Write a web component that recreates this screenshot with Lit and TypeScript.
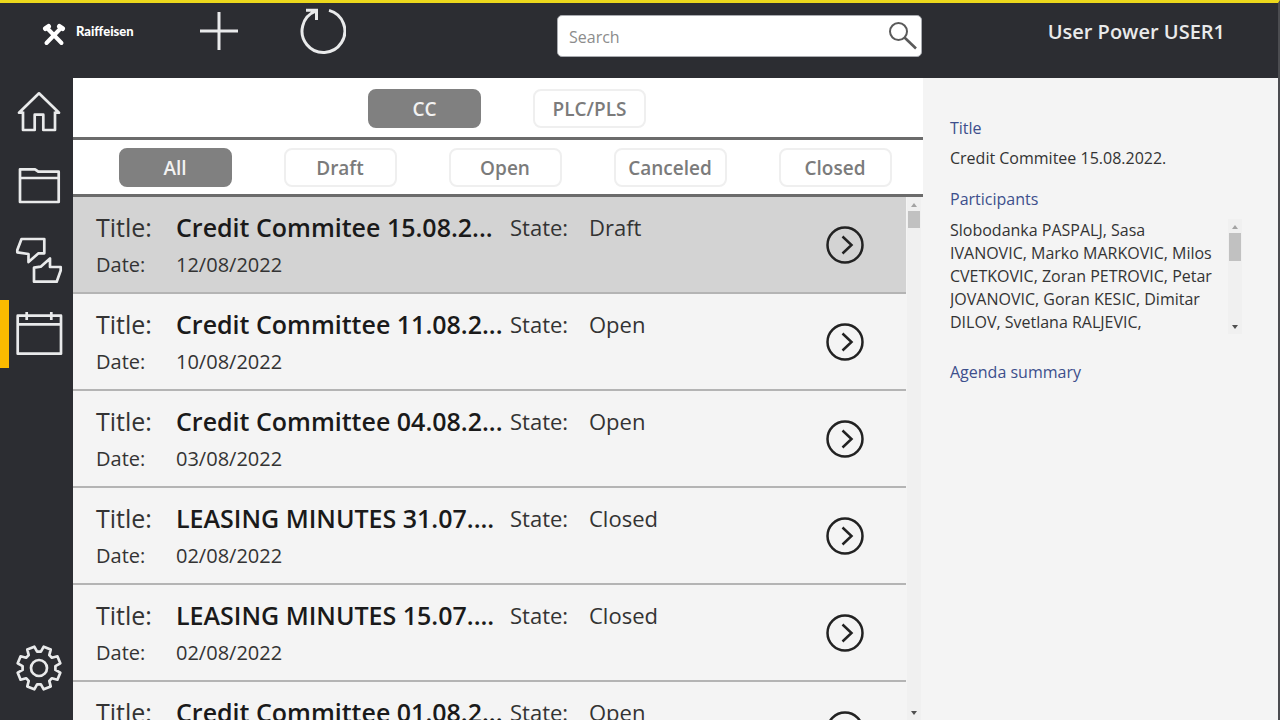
import { LitElement, html, css, svg } from "lit";
import { customElement, property, state } from "lit/decorators.js";
import { classMap } from "lit/directives/class-map.js";

interface Meeting {
  title: string;
  state: string;
  date: string;
}

const MEETINGS: Meeting[] = [
  { title: "Credit Commitee 15.08.2...", state: "Draft", date: "12/08/2022" },
  { title: "Credit Committee 11.08.2...", state: "Open", date: "10/08/2022" },
  { title: "Credit Committee 04.08.2...", state: "Open", date: "03/08/2022" },
  { title: "LEASING MINUTES 31.07....", state: "Closed", date: "02/08/2022" },
  { title: "LEASING MINUTES 15.07....", state: "Closed", date: "02/08/2022" },
  { title: "Credit Committee 01.08.2...", state: "Open", date: "01/08/2022" },
];

// Outline of an eight-toothed cog centred on (23, 23).
function cogPoints(): string {
  const pts: string[] = [];
  const at = (deg: number, r: number) => {
    const a = (deg * Math.PI) / 180;
    pts.push(`${(23 + r * Math.cos(a)).toFixed(1)},${(23 + r * Math.sin(a)).toFixed(1)}`);
  };
  for (let i = 0; i < 8; i++) {
    const c = 22.5 + i * 45;
    at(c - 16, 16.5);
    at(c - 10, 21.8);
    at(c + 10, 21.8);
    at(c + 16, 16.5);
  }
  return pts.join(" ");
}

const NAV_ICONS = {
  home: svg`<path d="M7 23.7H3L23 4.3L43 23.7H39M7 22.5V41H18.7V25.7H27.3V41H39V22.5"/>`,
  folder: svg`<path d="M4 6.3H19L22.3 8.7H42.7V39H4ZM4 15H42.7"/>`,
  votes: svg`<path d="M5.5 2H28.3V16.3H22.5L12.5 25V17L1.3 15.3V13ZM18 44.7V30.7L24.7 29.7L34 21.5V30H44.7V33.5L40.7 44.7Z"/>`,
  calendar: svg`<path d="M1.7 4.7H45V42.7H1.7ZM1.7 13.3H45M10.7 1V9M35.3 1V9"/>`,
  settings: svg`<polygon points=${cogPoints()}/><circle cx="23" cy="23" r="8"/>`,
};

@customElement("nav-item")
class NavItem extends LitElement {
  @property() icon: keyof typeof NAV_ICONS = "home";
  @property() label = "";
  @property({ type: Boolean }) active = false;

  static styles = css`
    :host {
      display: block;
    }
    .item {
      display: flex;
      align-items: center;
      width: 100%;
      height: 68px;
      padding: 0 0 0 7px;
      border: 0;
      border-left: 9px solid transparent;
      background: none;
      cursor: pointer;
    }
    .item.active {
      border-left-color: #fbba00;
    }
    .glyph {
      width: 46px;
      height: 46px;
      overflow: visible;
      fill: none;
      stroke: #e9eaeb;
      stroke-width: 2.7;
      stroke-linejoin: round;
    }
  `;

  render() {
    return html`<button class=${classMap({ item: true, active: this.active })} aria-label=${this.label}>
      <svg class="glyph" viewBox="0 0 46 46" aria-hidden="true">${NAV_ICONS[this.icon]}</svg>
    </button>`;
  }
}

@customElement("scroll-track")
class ScrollTrack extends LitElement {
  @property({ type: Number }) thumb = 17;

  static styles = css`
    :host {
      display: flex;
      flex-direction: column;
      align-items: center;
      width: 14px;
      background: #f0f0f0;
    }
    .arrow {
      flex: none;
      width: 14px;
      height: 14px;
      fill: #a3a3a3;
    }
    .down {
      margin-top: auto;
      fill: #505050;
    }
    .thumb {
      flex: none;
      width: 12px;
      background: #c1c1c1;
    }
  `;

  render() {
    return html`
      <svg class="arrow" viewBox="0 0 14 14" aria-hidden="true"><path d="M4 10L7 6L10 10Z" /></svg>
      <div class="thumb" style="height:${this.thumb}px"></div>
      <svg class="arrow down" viewBox="0 0 14 14" aria-hidden="true"><path d="M4 5L10 5L7 9Z" /></svg>
    `;
  }
}

@customElement("app-root")
class AppRoot extends LitElement {
  @state() private kind = "CC";
  @state() private filter = "All";
  @state() private selected = 0;

  static styles = css`
    :host {
      display: flex;
      flex-direction: column;
      box-sizing: border-box;
      height: 100vh;
      overflow: hidden;
      border-top: 3px solid #ecd81c;
      border-right: 2px solid #4b4c50;
      background: #2c2d32;
      color: #333;
      font-family: "Open Sans", "Noto Sans", sans-serif;
    }
    * {
      box-sizing: border-box;
    }
    button {
      font-family: inherit;
      cursor: pointer;
    }
    .header {
      flex: none;
      display: flex;
      align-items: flex-start;
      height: 75px;
    }
    .tools {
      flex: 1;
      display: flex;
      align-items: center;
      height: 56px;
      padding-left: 42px;
    }
    .brand {
      display: flex;
      align-items: center;
      gap: 10px;
      width: 158px;
      color: #fff;
      font: 900 13px/16px Lato, sans-serif;
      text-decoration: none;
    }
    .brand-mark {
      width: 24px;
      height: 24px;
      margin-top: 8px;
      fill: none;
      stroke: #fff;
      stroke-linecap: round;
    }
    .tool {
      display: flex;
      padding: 0;
      border: 0;
      background: none;
    }
    .tool + .tool {
      margin-left: 62px;
    }
    .tool-icon {
      fill: none;
      stroke: #e9eaeb;
      stroke-width: 3;
    }
    .search {
      display: flex;
      align-items: center;
      width: 365px;
      height: 42px;
      margin-top: 12px;
      padding: 0 4px 0 11px;
      border: 1px solid #a9abb0;
      border-radius: 5px;
      background: #fff;
    }
    .search-input {
      flex: 1;
      min-width: 0;
      padding: 2px 0 0;
      border: 0;
      outline: 0;
      background: none;
      color: #333;
      font: 16px/24px "Open Sans", sans-serif;
    }
    .search-input::placeholder {
      color: #8c8c8c;
      opacity: 1;
    }
    .search-icon {
      width: 30px;
      height: 30px;
      fill: none;
      stroke: #5a5a5a;
      stroke-width: 2;
    }
    .user {
      width: 356px;
      padding: 16px 53px 0 0;
      color: #e9eaeb;
      font-size: 20px;
      font-weight: 600;
      line-height: 26px;
      text-align: right;
    }
    .body {
      flex: 1;
      display: flex;
      min-height: 0;
    }
    .nav {
      flex: none;
      display: flex;
      flex-direction: column;
      gap: 6px;
      width: 73px;
      padding-bottom: 18px;
    }
    .nav-end {
      margin-top: auto;
    }
    .main {
      flex: 1;
      display: flex;
      flex-direction: column;
      min-width: 0;
      background: #fff;
    }
    .tabs {
      flex: none;
      display: flex;
      justify-content: center;
      gap: 52px;
      padding: 11px 0 9px 18px;
      border-bottom: 3px solid #6b6b6b;
    }
    .tabs.filters {
      padding: 8px 0 7px 14px;
    }
    .tab {
      width: 113px;
      height: 39px;
      padding: 0;
      border: 2px solid #efefef;
      border-radius: 8px;
      background: #fff;
      color: #7b7b7b;
      font-size: 19px;
      font-weight: 600;
      line-height: 24px;
    }
    .tab.on {
      border-color: #808080;
      background: #808080;
      color: #f2f2f2;
    }
    .list-area {
      flex: 1;
      display: flex;
      min-height: 0;
      padding-right: 2px;
      background: #f4f4f4;
    }
    .list {
      flex: 1;
      min-width: 0;
      margin: 0 1px 0 0;
      padding: 0;
      overflow: hidden;
      list-style: none;
    }
    .row {
      display: grid;
      grid-template-columns: 80px 334px 79px 1fr 38px;
      grid-template-rows: 32px 28px;
      row-gap: 8px;
      height: 97px;
      padding: 14px 42px 0 23px;
      border-bottom: 2px solid #b4b4b4;
      white-space: nowrap;
    }
    .row.selected {
      background: #d3d3d3;
    }
    .label,
    .title {
      font-size: 25px;
      line-height: 32px;
    }
    .title {
      color: #1a1a1a;
      font-weight: 600;
    }
    .state {
      font-size: 22px;
      line-height: 32px;
    }
    .date {
      font-size: 20px;
      line-height: 28px;
    }
    .open {
      grid-column: 5;
      grid-row: 1 / 3;
      align-self: center;
      display: flex;
      padding: 0;
      border: 0;
      background: none;
    }
    .open-icon {
      width: 38px;
      height: 38px;
      fill: none;
      stroke: #222;
      stroke-width: 2.5;
    }
    .details {
      flex: none;
      width: 355px;
      padding: 39px 36px 0 27px;
      background: #f4f4f4;
      font-size: 16px;
      line-height: 22px;
    }
    .heading {
      margin: 0;
      color: #3d4f8c;
      font-size: 16px;
      font-weight: 400;
      line-height: 22px;
    }
    .text {
      margin: 8px 0 19px;
    }
    .participants {
      display: flex;
      gap: 10px;
      height: 115px;
      margin: 9px 0 27px;
      overflow: hidden;
      line-height: 23px;
    }
    .names {
      flex: 1;
      margin: 0;
    }
  `;

  private tab(name: string, current: string, pick: () => void) {
    return html`<button
      class=${classMap({ tab: true, on: name === current })}
      aria-pressed=${name === current}
      @click=${pick}
    >${name}</button>`;
  }

  private row(m: Meeting, i: number) {
    return html`<li class=${classMap({ row: true, selected: i === this.selected })}>
      <span class="label">Title:</span>
      <span class="title">${m.title}</span>
      <span class="state">State:</span>
      <span class="state">${m.state}</span>
      <span class="date">Date:</span>
      <span class="date">${m.date}</span>
      <button class="open" aria-label="Open meeting" @click=${() => (this.selected = i)}>
        <svg class="open-icon" viewBox="0 0 38 38" aria-hidden="true">
          <circle cx="19" cy="19" r="17.5" />
          <path d="M16.5 10.5L25.5 19L16.5 27.5" />
        </svg>
      </button>
    </li>`;
  }

  render() {
    return html`
      <header class="header">
        <div class="tools">
          <a class="brand" href="#">
            <svg class="brand-mark" viewBox="0 0 24 24" aria-hidden="true">
              <path stroke-width="4" d="M5 5L19.5 20M19 5L4.5 20" />
              <path stroke-width="5" d="M3.5 5.5L6.5 3.5M20.5 5.5L17.5 3.5" />
            </svg>
            <span>Raiffeisen</span>
          </a>
          <button class="tool" aria-label="Add">
            <svg class="tool-icon" width="38" height="38" viewBox="0 0 38 38"><path d="M19 0V38M0 19H38" /></svg>
          </button>
          <button class="tool" aria-label="Refresh">
            <svg class="tool-icon" width="46" height="46" viewBox="0 0 46 46">
              <path d="M29 2.4A21.4 21.4 0 1 1 15.5 3.2M6 2.3H16.5V12" />
            </svg>
          </button>
        </div>
        <label class="search">
          <input class="search-input" type="text" placeholder="Search" aria-label="Search" />
          <svg class="search-icon" viewBox="0 0 30 30" aria-hidden="true">
            <circle cx="11.5" cy="10.5" r="8.5" />
            <path stroke-width="2.6" d="M17.5 16.5L29 27.5" />
          </svg>
        </label>
        <div class="user">User Power USER1</div>
      </header>
      <div class="body">
        <nav class="nav">
          <nav-item icon="home" label="Home"></nav-item>
          <nav-item icon="folder" label="Files"></nav-item>
          <nav-item icon="votes" label="Votes"></nav-item>
          <nav-item icon="calendar" label="Meetings" active></nav-item>
          <nav-item class="nav-end" icon="settings" label="Settings"></nav-item>
        </nav>
        <main class="main">
          <div class="tabs">
            ${["CC", "PLC/PLS"].map((n) => this.tab(n, this.kind, () => (this.kind = n)))}
          </div>
          <div class="tabs filters">
            ${["All", "Draft", "Open", "Canceled", "Closed"].map((n) =>
              this.tab(n, this.filter, () => (this.filter = n)),
            )}
          </div>
          <div class="list-area">
            <ul class="list">
              ${MEETINGS.map((m, i) => this.row(m, i))}
            </ul>
            <scroll-track thumb="17"></scroll-track>
          </div>
        </main>
        <aside class="details">
          <h2 class="heading">Title</h2>
          <p class="text">Credit Commitee 15.08.2022.</p>
          <h2 class="heading">Participants</h2>
          <div class="participants">
            <p class="names">
              Slobodanka PASPALJ, Sasa IVANOVIC, Marko MARKOVIC, Milos CVETKOVIC, Zoran PETROVIC, Petar
              JOVANOVIC, Goran KESIC, Dimitar DILOV, Svetlana RALJEVIC,
            </p>
            <scroll-track thumb="28"></scroll-track>
          </div>
          <h2 class="heading">Agenda summary</h2>
        </aside>
      </div>
    `;
  }
}
